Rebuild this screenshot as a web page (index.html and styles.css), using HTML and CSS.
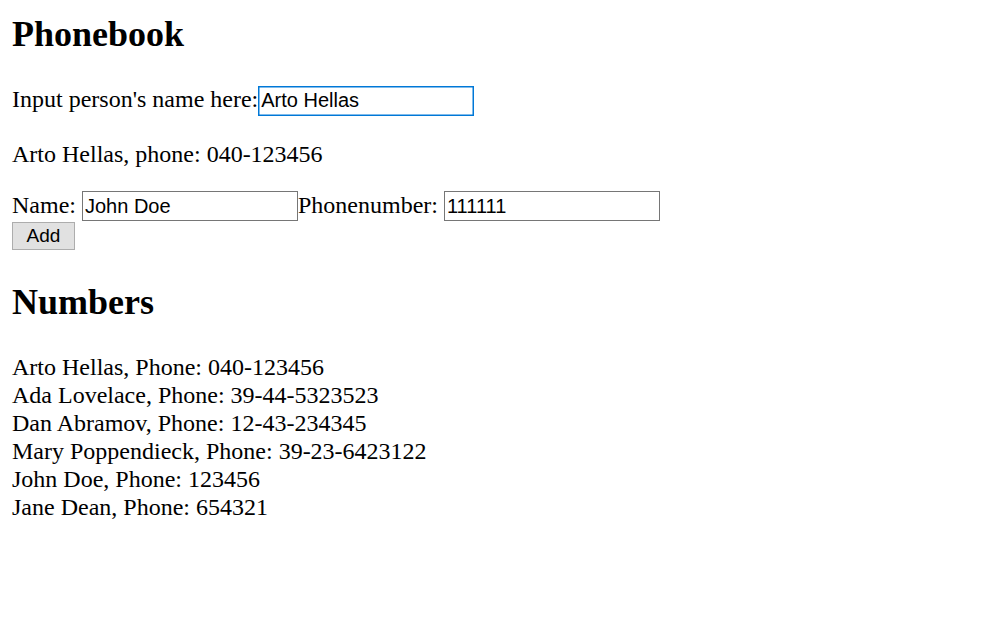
FILE: index.html
```html
<!DOCTYPE html>
<html>
<head>
<meta charset="utf-8">
<title>Phonebook</title>
<link rel="stylesheet" href="styles.css">
</head>
<body>
<div class="app">
  <h2 class="heading heading-first">Phonebook</h2>
  <div class="filter">Input person's name here:<input class="field field-focus" value="Arto Hellas" autofocus onfocus="this.setSelectionRange(this.value.length,this.value.length)"></div>
  <p class="found">Arto Hellas, phone: 040-123456</p>
  <form class="add-form">
    <div class="row">Name: <input class="field" value="John Doe">Phonenumber: <input class="field" value="111111"></div>
    <div class="row row-actions"><button class="btn" type="button">Add</button></div>
  </form>
  <h2 class="heading heading-numbers">Numbers</h2>
  <div class="list">
    <div>Arto Hellas, Phone: 040-123456</div>
    <div>Ada Lovelace, Phone: 39-44-5323523</div>
    <div>Dan Abramov, Phone: 12-43-234345</div>
    <div>Mary Poppendieck, Phone: 39-23-6423122</div>
    <div>John Doe, Phone: 123456</div>
    <div>Jane Dean, Phone: 654321</div>
  </div>
</div>
</body>
</html>
```
FILE: styles.css
```css
html, body {
  background: #ffffff;
}
body {
  margin: 0;
  padding: 14px 12px 12px 12px;
  font-family: "Liberation Serif", "Times New Roman", serif;
  font-size: 24px;
  line-height: 28px;
  color: #000;
}
.heading {
  font-size: 36px;
  line-height: 41px;
  font-weight: bold;
  margin: 30px 0;
}
.heading-first {
  margin-top: 0;
}
.heading-numbers {
  margin-top: 32px;
}
.found {
  margin: 24px 0 23px 0;
}
.add-form {
  margin: 0;
}
.row {
  line-height: 28px;
}
.row-actions {
  padding-top: 1px;
}
.field {
  box-sizing: border-box;
  width: 216px;
  height: 30px;
  padding: 1px 2px;
  margin: 0;
  border: 1px solid #767676;
  border-radius: 0;
  font-family: "Liberation Sans", Arial, sans-serif;
  font-size: 20px;
  line-height: normal;
  color: #000;
  background: #fff;
  outline: none;
  vertical-align: baseline;
}
.field-focus {
  border: 1px solid #0078d7;
  box-shadow: inset 0 0 0 0.5px #0078d7;
}
.btn {
  box-sizing: border-box;
  width: 63px;
  height: 28px;
  margin: 0;
  padding: 0 6px;
  border: 1px solid #adadad;
  border-radius: 0;
  background: #e1e1e1;
  font-family: "Liberation Sans", Arial, sans-serif;
  font-size: 19px;
  line-height: normal;
  color: #000;
  vertical-align: top;
}
.list {
  margin: 0;
}
```
